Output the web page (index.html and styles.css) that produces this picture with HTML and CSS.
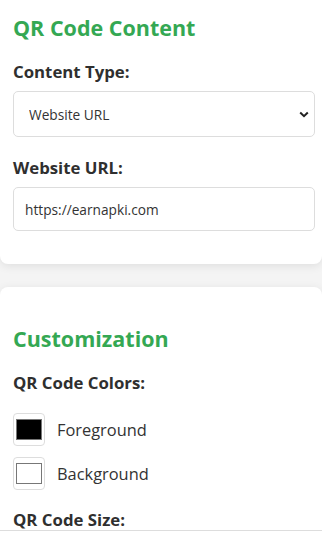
FILE: index.html
```html
<!DOCTYPE html>
<html lang="en">
<head>
<meta charset="utf-8">
<title>QR Code Generator</title>
<link rel="stylesheet" href="styles.css">
</head>
<body>
<section class="card card-content">
  <h2 class="card-title">QR Code Content</h2>
  <div class="field">
    <label class="field-label" for="type">Content Type:</label>
    <div class="select-wrap">
      <select id="type" class="control select">
        <option>Website URL</option>
      </select>
      <svg class="chevron" width="10" height="7" viewBox="0 0 10 7" aria-hidden="true"><path d="M1.2 1.5 L5 5.2 L8.8 1.5" fill="none" stroke="#222" stroke-width="2"/></svg>
    </div>
  </div>
  <div class="field">
    <label class="field-label" for="url">Website URL:</label>
    <input id="url" class="control input" type="text" value="https://earnapki.com">
  </div>
</section>

<section class="card card-custom">
  <h2 class="card-title">Customization</h2>
  <div class="field">
    <div class="field-label">QR Code Colors:</div>
    <div class="color-list">
      <div class="color-row">
        <span class="swatch-box"><span class="swatch swatch-black"></span></span>
        <span class="color-name">Foreground</span>
      </div>
      <div class="color-row">
        <span class="swatch-box"><span class="swatch swatch-white"></span></span>
        <span class="color-name">Background</span>
      </div>
    </div>
  </div>
  <div class="field field-size">
    <div class="field-label size-label">QR Code Size:</div>
  </div>
  <div class="bottom-rule"></div>
</section>
</body>
</html>
```

FILE: styles.css
```css
* { box-sizing: border-box; }

body {
  margin: 0;
  background: #f4f4f4;
  font-family: "Open Sans", "Noto Sans", sans-serif;
  color: #333;
  overflow: hidden;
}

.card {
  background: #fff;
  border-radius: 8px;
  box-shadow: 0 2px 10px rgba(0, 0, 0, 0.09);
  padding: 0 7px 0 13px;
}

.card-content {
  padding-top: 14px;
  padding-bottom: 33px;
  border-top-left-radius: 0;
  border-top-right-radius: 0;
}

.card-custom {
  margin-top: 23px;
  padding-top: 38px;
}

.card-title {
  margin: 0;
  font-size: 21.5px;
  line-height: 28px;
  font-weight: 700;
  color: #34a853;
}

.field { margin-top: 19px; }
.card-content .field + .field { margin-top: 20px; }

.field-label {
  display: block;
  font-size: 16.8px;
  line-height: 22px;
  font-weight: 700;
  color: #2f2f2f;
  margin-bottom: 8px;
}

.select-wrap { position: relative; }

.control {
  display: block;
  width: 100%;
  border: 1px solid #ddd;
  border-radius: 5px;
  background: #fff;
  font-family: inherit;
  color: #333;
  margin: 0;
  outline: none;
}

.select {
  height: 46px;
  padding: 0 30px 0 15px;
  font-size: 13.7px;
  appearance: none;
  -webkit-appearance: none;
}

.chevron {
  position: absolute;
  right: 6px;
  top: 20px;
}

.input {
  height: 44px;
  padding: 0 11px;
  font-size: 13.7px;
}

.color-list {
  display: flex;
  flex-direction: column;
  gap: 11px;
  padding-top: 11px;
}

.color-row {
  display: flex;
  align-items: center;
  gap: 12px;
}

.swatch-box {
  width: 32px;
  height: 33px;
  border: 1px solid #ddd;
  border-radius: 4px;
  padding: 5px 2px;
  display: flex;
}

.swatch {
  flex: 1;
  border: 1px solid #777;
}

.swatch-black { background: #000; }
.swatch-white { background: #fff; }

.color-name {
  font-size: 16.4px;
  color: #333;
}

.field-size { margin-top: 20px; }

.size-label {
  line-height: 20px;
  margin-bottom: 0;
}

.bottom-rule {
  border-top: 1px solid #ddd;
  margin: 0 -7px 0 -13px;
  height: 20px;
}
```
